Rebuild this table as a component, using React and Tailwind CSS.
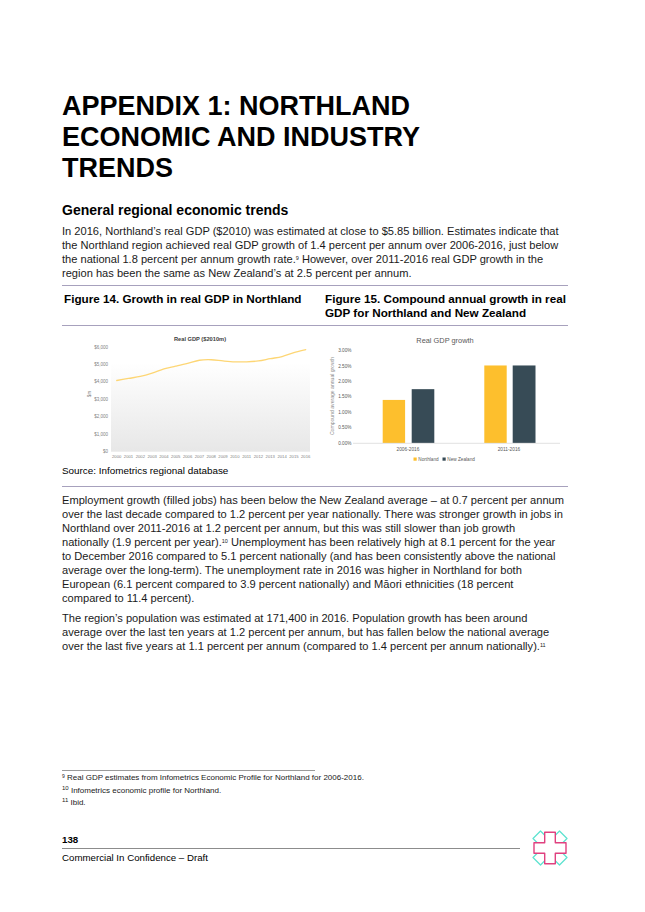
import React from "react";

const FONT = { fontFamily: '"Liberation Sans", Arial, sans-serif' };

function smoothPath(pts) {
  let d = `M${pts[0][0].toFixed(2)},${pts[0][1].toFixed(2)}`;
  for (let i = 0; i < pts.length - 1; i++) {
    const p0 = pts[i - 1] || pts[i];
    const p1 = pts[i];
    const p2 = pts[i + 1];
    const p3 = pts[i + 2] || p2;
    const c1x = p1[0] + (p2[0] - p0[0]) / 6;
    const c1y = p1[1] + (p2[1] - p0[1]) / 6;
    const c2x = p2[0] - (p3[0] - p1[0]) / 6;
    const c2y = p2[1] - (p3[1] - p1[1]) / 6;
    d += ` C${c1x.toFixed(2)},${c1y.toFixed(2)} ${c2x.toFixed(2)},${c2y.toFixed(2)} ${p2[0].toFixed(2)},${p2[1].toFixed(2)}`;
  }
  return d;
}

const gdp = [4080, 4200, 4310, 4500, 4750, 4900, 5060, 5240, 5270, 5200, 5150, 5150, 5200, 5330, 5450, 5680, 5850];
const years = Array.from({ length: 17 }, (_, i) => 2000 + i);

function LineChart() {
  const y0 = 125.7;
  const k = 104.7 / 6000;
  const x0 = 54.7;
  const dx = 11.8125;
  const pts = gdp.map((v, i) => [x0 + i * dx, y0 - v * k]);
  return (
    <svg width="260" height="139" viewBox="0 0 260 139" className="block">
      <defs>
        <linearGradient id="plotbg" x1="0" y1="0" x2="0" y2="1">
          <stop offset="0" stopColor="#ffffff" />
          <stop offset="0.15" stopColor="#ffffff" />
          <stop offset="1" stopColor="#e7e7e7" />
        </linearGradient>
      </defs>
      <rect x="49" y="21" width="199" height={y0 - 21} fill="url(#plotbg)" />
      <text x="138" y="15" textAnchor="middle" fontSize="5.7" fontWeight="bold" fill="#404040" style={FONT}>
        Real GDP ($2010m)
      </text>
      {[0, 1000, 2000, 3000, 4000, 5000, 6000].map((v) => (
        <text key={v} x="46" y={y0 - v * k + 1.5} textAnchor="end" fontSize="4.5" fill="#7f7f7f" style={FONT}>
          {"$" + v.toLocaleString("en-US")}
        </text>
      ))}
      <text x="0" y="0" transform="translate(28.5 68) rotate(-90)" textAnchor="middle" fontSize="4.5" fill="#7f7f7f" style={FONT}>
        $m
      </text>
      {years.map((yr, i) => (
        <text key={yr} x={x0 + i * dx} y="131.5" textAnchor="middle" fontSize="4.2" fill="#7f7f7f" style={FONT}>
          {yr}
        </text>
      ))}
      <path d={smoothPath(pts)} fill="none" stroke="#fdd675" strokeWidth="1.3" strokeLinecap="round" />
    </svg>
  );
}

function BarChart() {
  const y0 = 117;
  const k = 92.3 / 3;
  const bars = [
    { x: 60.7, w: 22.4, v: 1.4, c: "#fdbf2d" },
    { x: 89.7, w: 22.6, v: 1.75, c: "#374b56" },
    { x: 162.3, w: 22.4, v: 2.52, c: "#fdbf2d" },
    { x: 190.7, w: 22.8, v: 2.52, c: "#374b56" },
  ];
  return (
    <svg width="246" height="139" viewBox="0 0 246 139" className="block">
      <text x="123" y="17.3" textAnchor="middle" fontSize="7.4" fill="#595959" style={FONT}>
        Real GDP growth
      </text>
      {[0, 0.5, 1, 1.5, 2, 2.5, 3].map((v) => (
        <text key={v} x="29.5" y={y0 - v * k + 1.6} textAnchor="end" fontSize="4.7" fill="#595959" style={FONT}>
          {v.toFixed(2) + "%"}
        </text>
      ))}
      <text x="0" y="0" transform="translate(11.8 70) rotate(-90)" textAnchor="middle" fontSize="5.1" fill="#8c8c8c" style={FONT}>
        Compound average annual growth
      </text>
      {bars.map((b, i) => (
        <rect key={i} x={b.x} y={y0 - b.v * k} width={b.w} height={b.v * k} fill={b.c} />
      ))}
      <line x1="31" y1={y0 + 0.3} x2="238" y2={y0 + 0.3} stroke="#d9d9d9" strokeWidth="0.8" />
      <text x="86" y="124.7" textAnchor="middle" fontSize="4.8" fill="#595959" style={FONT}>
        2006-2016
      </text>
      <text x="187" y="124.7" textAnchor="middle" fontSize="4.8" fill="#595959" style={FONT}>
        2011-2016
      </text>
      <rect x="91.5" y="131.5" width="3.2" height="3.2" fill="#fdbf2d" />
      <text x="96.3" y="134.7" fontSize="4.7" fill="#595959" style={FONT}>
        Northland
      </text>
      <rect x="120.5" y="131.5" width="3.2" height="3.2" fill="#374b56" />
      <text x="125.3" y="134.7" fontSize="4.7" fill="#595959" style={FONT}>
        New Zealand
      </text>
    </svg>
  );
}

function Logo() {
  return (
    <svg width="36" height="36" viewBox="0 0 36 36" className="block">
      <g fill="none" stroke="#5fe3d0" strokeWidth="1.3" strokeLinejoin="round">
        <path d="M8.5 1 L16 8.5 L8.5 16 L1 8.5 Z" />
        <path d="M27.5 1 L35 8.5 L27.5 16 L20 8.5 Z" />
        <path d="M8.5 20 L16 27.5 L8.5 35 L1 27.5 Z" />
        <path d="M27.5 20 L35 27.5 L27.5 35 L20 27.5 Z" />
      </g>
      <path
        d="M12.7 2.3 H23.3 V12.7 H34 V23.3 H23.3 V33.7 H12.7 V23.3 H2 V12.7 H12.7 Z"
        fill="#ffffff"
        stroke="#e0407f"
        strokeWidth="1.4"
        strokeLinejoin="round"
      />
    </svg>
  );
}

export default function App() {
  return (
    <div className="w-[645px] h-[912px] bg-white text-black pl-[62px] pt-[91px] overflow-hidden" style={FONT}>
      <div className="w-[506px]">
        <h1 className="text-[27px] leading-[31px] font-bold">
          APPENDIX 1: NORTHLAND
          <br />
          ECONOMIC AND INDUSTRY
          <br />
          TRENDS
        </h1>
        <h2 className="mt-[18px] text-[14px] leading-[17px] font-bold">General regional economic trends</h2>
        <p className="mt-[5px] text-[11.1px] leading-[14px] text-[#1a1a1a]">
          In 2016, Northland’s real GDP ($2010) was estimated at close to $5.85 billion. Estimates indicate that the
          Northland region achieved real GDP growth of 1.4 percent per annum over 2006-2016, just below the national 1.8
          percent per annum growth rate.<sup className="text-[5.5px]">9</sup> However, over 2011-2016 real GDP growth in
          the region has been the same as New Zealand’s at 2.5 percent per annum.
        </p>

        <div className="mt-[5px] border-t-[1.5px] border-b-[1.5px] border-[#a7a1bd]">
          <div className="grid grid-cols-[260px_246px] border-b-[1.5px] border-[#a7a1bd] pt-[6px] pb-[5px]">
            <div className="pl-[2px] text-[11.7px] leading-[14px] font-bold">Figure 14. Growth in real GDP in Northland</div>
            <div className="pl-[3px] text-[11.7px] leading-[14px] font-bold">
              Figure 15. Compound annual growth in real GDP for Northland and New Zealand
            </div>
          </div>
          <div className="grid grid-cols-[260px_246px]">
            <LineChart />
            <BarChart />
          </div>
          <div className="text-[9.9px] leading-[12px] pb-[9px]">Source: Infometrics regional database</div>
        </div>

        <p className="mt-[6px] text-[11.1px] leading-[14px] text-[#1a1a1a] whitespace-nowrap">
          Employment growth (filled jobs) has been below the New Zealand average – at 0.7 percent per annum
          <br />
          over the last decade compared to 1.2 percent per year nationally. There was stronger growth in jobs in
          <br />
          Northland over 2011-2016 at 1.2 percent per annum, but this was still slower than job growth
          <br />
          nationally (1.9 percent per year).<sup className="text-[5.5px]">10</sup> Unemployment has been relatively high at
          8.1 percent for the year
          <br />
          to December 2016 compared to 5.1 percent nationally (and has been consistently above the national
          <br />
          average over the long-term). The unemployment rate in 2016 was higher in Northland for both
          <br />
          European (6.1 percent compared to 3.9 percent nationally) and Māori ethnicities (18 percent
          <br />
          compared to 11.4 percent).
        </p>
        <p className="mt-[6px] text-[11.1px] leading-[14px] text-[#1a1a1a]">
          The region’s population was estimated at 171,400 in 2016. Population growth has been around average over the
          last ten years at 1.2 percent per annum, but has fallen below the national average over the last five years at
          1.1 percent per annum (compared to 1.4 percent per annum nationally).<sup className="text-[5.5px]">11</sup>
        </p>

        <div className="mt-[117px] w-[253px] h-px bg-[#9a9a9a]" />
        <div className="mt-[1px] text-[8px] leading-[12.5px] text-[#1a1a1a]">
          <div>
            <sup className="text-[5px]">9</sup> Real GDP estimates from Infometrics Economic Profile for Northland for
            2006-2016.
          </div>
          <div>
            <sup className="text-[6px]">10</sup> Infometrics economic profile for Northland.
          </div>
          <div>
            <sup className="text-[6px]">11</sup> Ibid.
          </div>
        </div>

        <div className="mt-[20px] flex items-start">
          <div className="w-[461px] pt-[4px]">
            <div className="text-[9.7px] leading-[12px] font-bold">138</div>
            <div className="mt-[2px] h-px bg-[#8c8c8c]" />
            <div className="mt-[3px] text-[9.7px] leading-[12px]">Commercial In Confidence – Draft</div>
          </div>
          <div className="ml-[12px]">
            <Logo />
          </div>
        </div>
      </div>
    </div>
  );
}
